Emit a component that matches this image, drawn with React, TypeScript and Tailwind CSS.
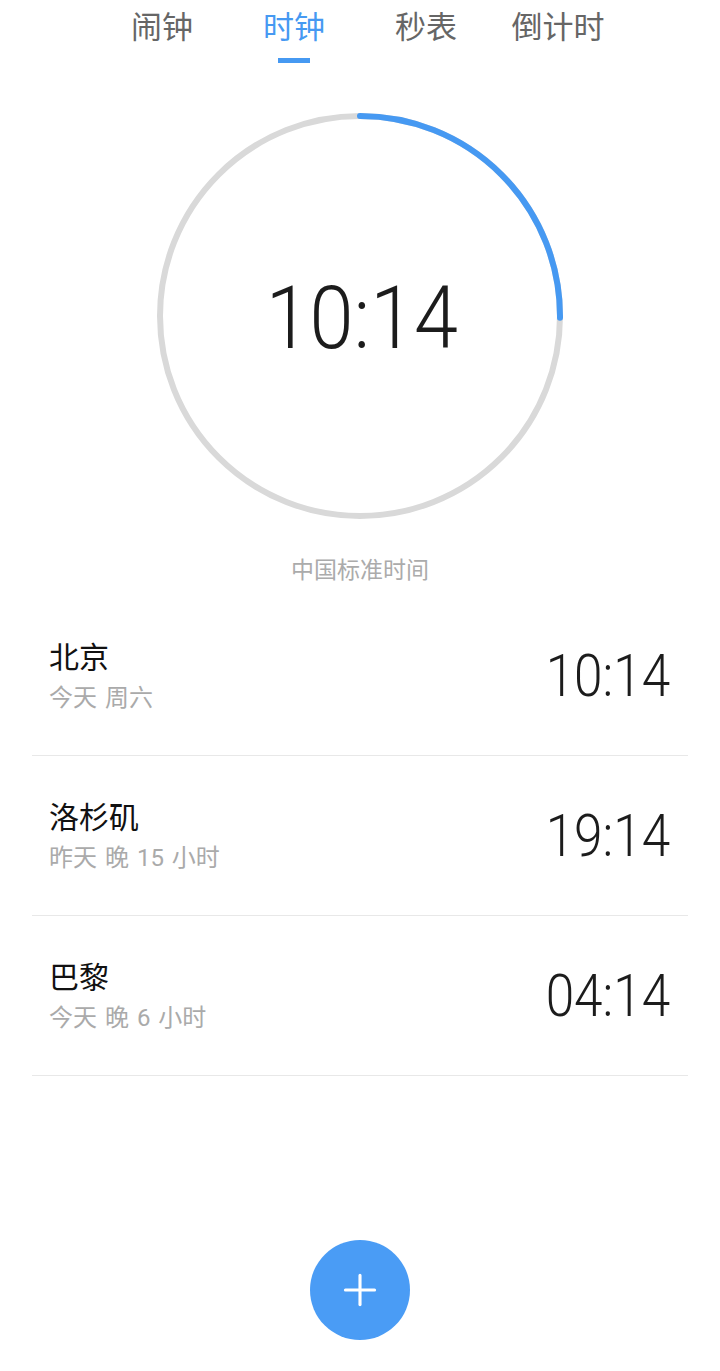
import { Plus } from "lucide-react";

const cjk = "font-['Roboto','Noto_Sans_CJK_SC',sans-serif]";
const digits = "font-['Roboto',sans-serif] font-light";

const tabs = ["闹钟", "时钟", "秒表", "倒计时"];

const cities = [
  { name: "北京", sub: "今天 周六", time: "10:14" },
  { name: "洛杉矶", sub: "昨天 晚 15 小时", time: "19:14" },
  { name: "巴黎", sub: "今天 晚 6 小时", time: "04:14" },
];

function Dial() {
  const r = 200;
  const c = 2 * Math.PI * r;
  const arc = c * (90.5 / 360);
  return (
    <div className="relative mx-auto flex h-[412px] w-[412px] items-center justify-center">
      <svg className="absolute inset-0" width="412" height="412" viewBox="0 0 412 412">
        <circle cx="206" cy="206" r={r} fill="none" stroke="#d9d9d9" strokeWidth="6" />
        <circle
          cx="206"
          cy="206"
          r={r}
          fill="none"
          stroke="#4699f2"
          strokeWidth="6"
          strokeLinecap="round"
          strokeDasharray={`${arc} ${c}`}
          transform="rotate(-90 206 206)"
        />
      </svg>
      <span className={`${digits} mt-[3px] ml-[4px] scale-x-90 text-[88px] leading-none text-[#1c1c1c]`}>10:14</span>
    </div>
  );
}

export default function App() {
  return (
    <div className={`${cjk} flex min-h-[1371px] w-[720px] flex-col bg-white`}>
      <div className="flex justify-center pt-[8px]">
        {tabs.map((t, i) => (
          <div key={t} className="flex w-[132px] flex-col items-center">
            <span
              className={`text-[31px] leading-[40px] ${i === 1 ? "text-[#4699f2]" : "text-[#666666]"}`}
            >
              {t}
            </span>
            <div className={`mt-[10px] h-[5px] w-[32px] ${i === 1 ? "bg-[#4699f2]" : ""}`} />
          </div>
        ))}
      </div>

      <div className="mt-[47px]">
        <Dial />
      </div>

      <p className="mt-[34px] text-center text-[23px] leading-[30px] text-[#ababab]">中国标准时间</p>

      <div className="mx-[32px] mt-[10px] flex flex-col">
        {cities.map((c) => (
          <div
            key={c.name}
            className="flex h-[160px] items-center justify-between border-b border-[#e8e8e8] pl-[17px] pr-[18px]"
          >
            <div className="flex flex-col gap-[6px]">
              <span className="text-[30px] leading-[38px] text-[#111111]">{c.name}</span>
              <span className="text-[24px] leading-[30px] text-[#aaaaaa] [word-spacing:2px]">{c.sub}</span>
            </div>
            <span className={`${digits} origin-right scale-x-87 text-[59px] leading-none text-[#1c1c1c]`}>
              {c.time}
            </span>
          </div>
        ))}
      </div>

      <div className="mt-auto flex justify-center pb-[31px]">
        <button className="flex h-[100px] w-[100px] items-center justify-center rounded-full bg-[#4a9cf5]">
          <Plus className="text-white" size={50} strokeWidth={1.5} />
        </button>
      </div>
    </div>
  );
}
